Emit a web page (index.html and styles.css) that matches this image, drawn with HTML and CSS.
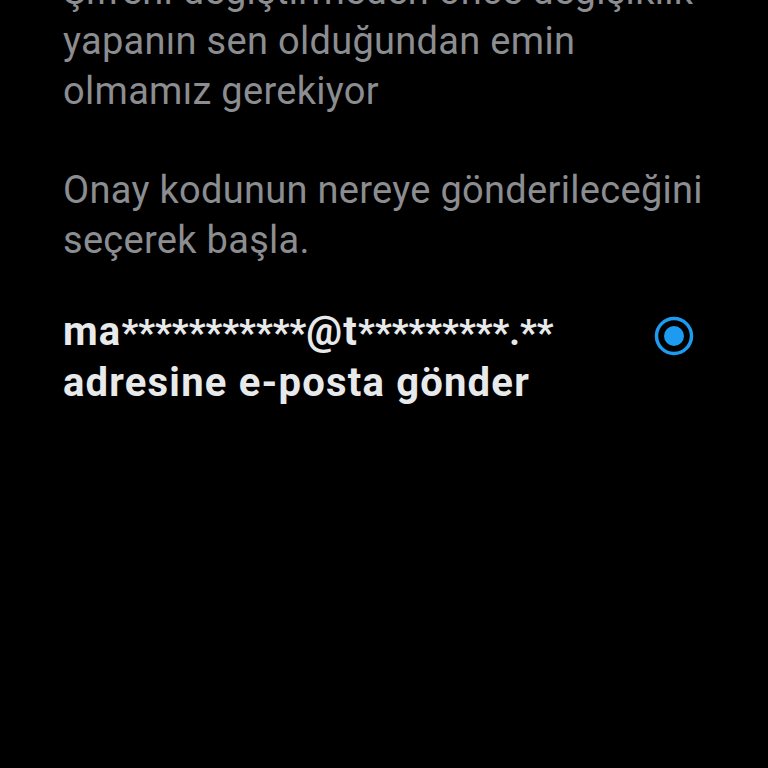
FILE: index.html
```html
<!DOCTYPE html>
<html lang="tr">
<head>
<meta charset="utf-8">
<link rel="stylesheet" href="styles.css">
</head>
<body>
<main class="page">
  <p class="desc">Şifreni değiştirmeden önce değişiklik yapanın sen olduğundan emin olmamız gerekiyor</p>
  <p class="desc second">Onay kodunun nereye gönderileceğini seçerek başla.</p>
  <div class="option">
    <div class="option-text">ma<span class="mask">***********</span>@t<span class="mask">*********.**</span><br>adresine e-posta gönder</div>
    <svg class="radio" width="42" height="42" viewBox="0 0 42 42">
      <circle cx="21" cy="21" r="17.5" fill="none" stroke="#1d9bf0" stroke-width="3.5"/>
      <circle cx="21" cy="21" r="10" fill="#1d9bf0"/>
    </svg>
  </div>
</main>
</body>
</html>
```
FILE: styles.css
```css
html, body {
  margin: 0;
  padding: 0;
  background: #000;
  height: 100%;
  overflow: hidden;
}
.page {
  margin-top: -34px;
  padding: 0 62px 0 63px;
  font-family: Roboto, "Noto Sans", sans-serif;
}
.desc {
  margin: 0;
  color: #8b8d90;
  font-size: 38px;
  letter-spacing: 0.3px;
  line-height: 50px;
  width: 660px;
}
.second {
  margin-top: 49px;
}
.option {
  margin-top: 42px;
  display: flex;
  justify-content: space-between;
  align-items: flex-start;
}
.option-text {
  color: #e7e9ea;
  font-weight: 700;
  font-size: 40px;
  letter-spacing: 1.2px;
  line-height: 50px;
}
.mask {
  font-size: 37px;
  letter-spacing: 0;
}
.radio {
  margin-top: 8px;
  margin-right: 11px;
}
```
